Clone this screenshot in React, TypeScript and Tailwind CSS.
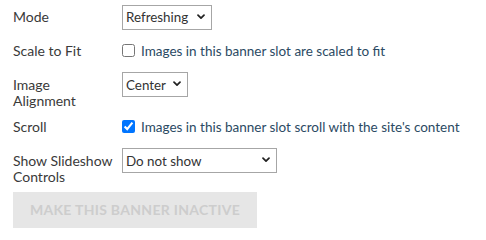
import React, { useState } from 'react';

const labelCls = 'w-[109px] shrink-0 text-[14px] leading-[16px] text-[#3a3a3a]';
const selectCls =
  'appearance-none h-[25px] border border-[#a6a6a6] bg-white pl-[3px] pr-[16px] text-[13.4px] text-[#333] font-["Lato",sans-serif] rounded-none outline-none';
const checkTextCls = 'ml-[6px] text-[13.5px] leading-[16px] text-[#2b4a63]';

function Chevron() {
  return (
    <svg
      className="pointer-events-none absolute right-[7px] top-1/2 -translate-y-1/2"
      width="8"
      height="6"
      viewBox="0 0 8 6"
      fill="none"
    >
      <path d="M1 1.2 4 4.2 7 1.2" stroke="#222" strokeWidth="1.7" strokeLinecap="round" strokeLinejoin="round" />
    </svg>
  );
}

function Select({
  value,
  onChange,
  width,
  height,
  children,
}: {
  value: string;
  onChange: (v: string) => void;
  width: string;
  height?: string;
  children: React.ReactNode;
}) {
  return (
    <div className={`relative ${width}`}>
      <select
        className={`${selectCls} w-full ${height ?? ''}`}
        value={value}
        onChange={(e) => onChange(e.target.value)}
      >
        {children}
      </select>
      <Chevron />
    </div>
  );
}

export default function App() {
  const [mode, setMode] = useState('refreshing');
  const [scaleToFit, setScaleToFit] = useState(false);
  const [align, setAlign] = useState('center');
  const [scroll, setScroll] = useState(true);
  const [controls, setControls] = useState('none');

  return (
    <div className="min-h-[240px] w-[486px] bg-white pt-[4px] pl-[13px] font-['Lato',sans-serif]">
      {/* Mode */}
      <div className="flex items-start">
        <div className={`${labelCls} pt-[5px]`}>Mode</div>
        <Select value={mode} onChange={setMode} width="w-[90px]">
          <option value="refreshing">Refreshing</option>
          <option value="static">Static</option>
          <option value="slideshow">Slideshow</option>
        </Select>
      </div>

      {/* Scale to fit */}
      <div className="mt-[13px] flex items-center">
        <div className={labelCls}>Scale to Fit</div>
        <label className="flex items-center">
          <input
            type="checkbox"
            className="h-[13px] w-[13px]"
            checked={scaleToFit}
            onChange={(e) => setScaleToFit(e.target.checked)}
          />
          <span className={checkTextCls}>Images in this banner slot are scaled to fit</span>
        </label>
      </div>

      {/* Image alignment */}
      <div className="mt-[13px] flex items-start">
        <div className={`${labelCls} pt-[5px]`}>
          Image
          <br />
          Alignment
        </div>
        <Select value={align} onChange={setAlign} width="w-[66px]">
          <option value="left">Left</option>
          <option value="center">Center</option>
          <option value="right">Right</option>
        </Select>
      </div>

      {/* Scroll */}
      <div className="mt-[10px] flex items-center">
        <div className={labelCls}>Scroll</div>
        <label className="flex items-center">
          <input
            type="checkbox"
            className="h-[13px] w-[13px]"
            checked={scroll}
            onChange={(e) => setScroll(e.target.checked)}
          />
          <span className={checkTextCls}>Images in this banner slot scroll with the site's content</span>
        </label>
      </div>

      {/* Slideshow controls */}
      <div className="mt-[13px] flex items-start">
        <div className={`${labelCls} pt-[5px]`}>
          Show Slideshow
          <br />
          Controls
        </div>
        <Select value={controls} onChange={setControls} width="w-[155px]" height="h-[24px]">
          <option value="none">Do not show</option>
          <option value="hover">Show when hovering</option>
          <option value="always">Always show</option>
        </Select>
      </div>

      <button
        disabled
        className="mt-[7px] h-[36px] w-[244px] bg-[#e6e6e6] text-[14px] font-bold uppercase tracking-[0.3px] text-[#cdcdcd]"
      >
        Make this banner inactive
      </button>
    </div>
  );
}
